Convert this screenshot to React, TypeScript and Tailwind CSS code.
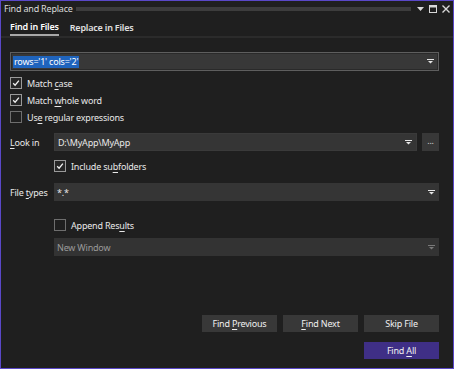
import type { ReactNode } from 'react'

const font = { fontFamily: '"Noto Sans", "Open Sans", sans-serif' }

function Caret({ dim = false }: { dim?: boolean }) {
  return (
    <svg width="7" height="5" viewBox="0 0 7 5" className="shrink-0">
      <rect x="0" y="0" width="7" height="1" fill={dim ? '#7a7a7a' : '#e6e6e6'} />
      <path d="M1 2h5L3.5 4.6z" fill={dim ? '#7a7a7a' : '#e6e6e6'} />
    </svg>
  )
}

function Box({ checked }: { checked: boolean }) {
  return (
    <span
      className={
        'flex h-[12px] w-[12px] shrink-0 items-center justify-center border ' +
        (checked ? 'border-[#9a9a9a] bg-[#262626]' : 'border-[#6e6e6e] bg-[#1f1f1f]')
      }
    >
      {checked && (
        <svg width="8" height="8" viewBox="0 0 8 8">
          <path d="M1.2 4.3 3.1 6.2 6.9 1.6" fill="none" stroke="#f2f2f2" strokeWidth="1.3" />
        </svg>
      )}
    </span>
  )
}

function Check({ checked, children }: { checked: boolean; children: ReactNode }) {
  return (
    <div className="flex h-[12px] items-center gap-[5px]">
      <Box checked={checked} />
      <span className="whitespace-nowrap text-[9px] leading-none tracking-[-0.2px] text-[#e8e8e8]">{children}</span>
    </div>
  )
}

function U({ children }: { children: ReactNode }) {
  return <span className="underline underline-offset-[2px]">{children}</span>
}

function Btn({ children, primary = false }: { children: ReactNode; primary?: boolean }) {
  return (
    <button
      className={
        'flex h-[17px] w-[75px] items-center justify-center whitespace-pre text-[9px] leading-none tracking-[-0.2px] text-[#f0f0f0] ' +
        (primary ? 'bg-[#3f2f86]' : 'bg-[#383838]')
      }
    >
      {children}
    </button>
  )
}

export default function App() {
  return (
    <div
      style={font}
      className="flex h-[369px] w-[454px] flex-col overflow-hidden border border-[#5a48c8] bg-[#1f1f1f] text-[#e8e8e8]"
    >
      {/* title bar */}
      <div className="flex h-[15px] shrink-0 items-center pl-[3px] pr-[3px]">
        <span className="whitespace-nowrap text-[9px] leading-none tracking-[-0.2px] text-[#dcdcdc]">Find and Replace</span>
        <div className="ml-[3px] mr-[6px] h-[4px] flex-1 bg-[radial-gradient(circle,#3f3f3f_0.7px,transparent_0.8px)] bg-[length:2px_2px]" />
        <div className="flex items-center gap-[5px]">
          <svg width="7" height="4" viewBox="0 0 7 4">
            <path d="M0 0h7L3.5 4z" fill="#d8d8d8" />
          </svg>
          <svg width="8" height="8" viewBox="0 0 8 8">
            <rect x="0.5" y="0.5" width="7" height="7" fill="none" stroke="#d8d8d8" />
            <rect x="0.5" y="0.5" width="7" height="2" fill="#d8d8d8" />
          </svg>
          <svg width="8" height="8" viewBox="0 0 8 8">
            <path d="M0.5 0.5 7.5 7.5M7.5 0.5 0.5 7.5" stroke="#d8d8d8" strokeWidth="1.4" />
          </svg>
        </div>
      </div>

      {/* tabs */}
      <div className="flex h-[22px] shrink-0 items-stretch gap-[11px] border-b-2 border-[#2b2b2b] pl-[9px]">
        <div className="flex flex-col justify-center whitespace-nowrap border-b-2 border-[#a8a8a8] pt-[2px] text-[9px] font-semibold leading-none tracking-[-0.2px] text-white">
          Find in Files
        </div>
        <div className="flex flex-col justify-center whitespace-nowrap pt-[2px] text-[9px] font-semibold leading-none tracking-[-0.2px] text-[#e0e0e0]">
          Replace in Files
        </div>
      </div>

      <div className="flex flex-1 flex-col pl-[9px] pr-[14px] tracking-[-0.2px]">
        {/* search text */}
        <div className="mt-[14px] flex h-[19px] shrink-0 items-center border border-[#5e5e5e] bg-[#383838] pl-[2px] pr-[4px] shadow-[inset_0_0_0_1px_#2a2a2a]">
          <span className="whitespace-nowrap bg-[#1f64bd] px-[1px] text-[9px] leading-[12px] text-white">rows='1' cols='2'</span>
          <div className="flex-1" />
          <Caret />
        </div>

        <div className="mt-[6px] flex flex-col gap-[5px]">
          <Check checked>
            Match <U>c</U>ase
          </Check>
          <Check checked>
            Match <U>w</U>hole word
          </Check>
          <Check checked={false}>
            Us<U>e</U> regular expressions
          </Check>
        </div>

        {/* look in */}
        <div className="mt-[10px] flex h-[18px] shrink-0 items-center">
          <span className="w-[44px] shrink-0 whitespace-nowrap text-[9px] leading-none">
            <U>L</U>ook in
          </span>
          <div className="flex h-full flex-1 items-center border border-[#3a3a3a] bg-[#353535] pl-[3px] pr-[4px]">
            <span className="whitespace-nowrap text-[9px] leading-none">D:\MyApp\MyApp</span>
            <div className="flex-1" />
            <Caret />
          </div>
          <div className="ml-[5px] flex h-full w-[17px] items-center justify-center bg-[#383838] pb-[3px] text-[9px] leading-none text-[#cfcfcf]">
            ...
          </div>
        </div>

        <div className="ml-[44px] mt-[9px]">
          <Check checked>
            Include su<U>b</U>folders
          </Check>
        </div>

        {/* file types */}
        <div className="mt-[11px] flex h-[18px] shrink-0 items-center">
          <span className="w-[44px] shrink-0 whitespace-nowrap text-[9px] leading-none">
            File <U>t</U>ypes
          </span>
          <div className="flex h-full flex-1 items-center bg-[#353535] pl-[3px] pr-[4px]">
            <span className="text-[9px] leading-none">*.*</span>
            <div className="flex-1" />
            <Caret />
          </div>
        </div>

        <div className="ml-[44px] mt-[18px]">
          <Check checked={false}>
            Append Res<U>u</U>lts
          </Check>
        </div>

        <div className="ml-[44px] mt-[7px] flex h-[18px] shrink-0 items-center bg-[#333333] pl-[3px] pr-[4px]">
          <span className="whitespace-nowrap text-[9px] leading-none text-[#9a9a9a]">New Window</span>
          <div className="flex-1" />
          <Caret dim />
        </div>

        {/* actions */}
        <div className="mt-auto flex flex-col items-end gap-[10px] pb-[9px]">
          <div className="flex gap-[6px]">
            <Btn>
              Find{' '}
              <U>P</U>revious
            </Btn>
            <Btn>
              <U>F</U>ind Next
            </Btn>
            <Btn>Skip File</Btn>
          </div>
          <Btn primary>
            Find{' '}
            <U>A</U>ll
          </Btn>
        </div>
      </div>
    </div>
  )
}
